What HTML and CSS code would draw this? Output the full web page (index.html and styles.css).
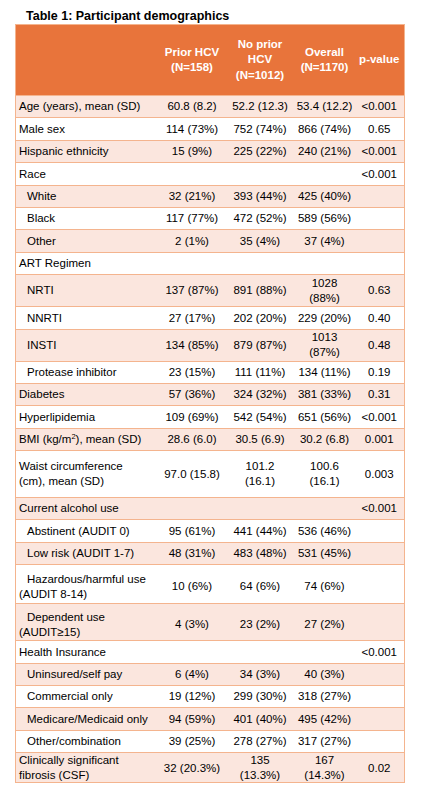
FILE: index.html
```html
<!DOCTYPE html>
<html lang="en">
<head>
    <meta charset="UTF-8">
    <meta name="viewport" content="width=device-width, initial-scale=1.0">
    <title>Table 1: Participant demographics</title>
    <link rel="stylesheet" href="styles.css">
</head>
<body>
    <h1 class="table-title">Table 1: Participant demographics</h1>

    <table class="demo-table">
        <colgroup>
            <col class="col-label">
            <col class="col-prior">
            <col class="col-noprior">
            <col class="col-overall">
            <col class="col-p">
        </colgroup>
        <thead>
            <tr>
                <th></th>
                <th>Prior HCV<br>(N=158)</th>
                <th>No prior<br>HCV<br>(N=1012)</th>
                <th>Overall<br>(N=1170)</th>
                <th>p-value</th>
            </tr>
        </thead>
        <tbody>
            <tr class="band">
                <td class="label">Age (years), mean (SD)</td>
                <td>60.8 (8.2)</td><td>52.2 (12.3)</td><td>53.4 (12.2)</td><td>&lt;0.001</td>
            </tr>
            <tr>
                <td class="label">Male sex</td>
                <td>114 (73%)</td><td>752 (74%)</td><td>866 (74%)</td><td>0.65</td>
            </tr>
            <tr class="band">
                <td class="label">Hispanic ethnicity</td>
                <td>15 (9%)</td><td>225 (22%)</td><td>240 (21%)</td><td>&lt;0.001</td>
            </tr>
            <tr>
                <td class="label">Race</td>
                <td></td><td></td><td></td><td>&lt;0.001</td>
            </tr>
            <tr class="band">
                <td class="label sub">White</td>
                <td>32 (21%)</td><td>393 (44%)</td><td>425 (40%)</td><td></td>
            </tr>
            <tr>
                <td class="label sub">Black</td>
                <td>117 (77%)</td><td>472 (52%)</td><td>589 (56%)</td><td></td>
            </tr>
            <tr class="band">
                <td class="label sub">Other</td>
                <td>2 (1%)</td><td>35 (4%)</td><td>37 (4%)</td><td></td>
            </tr>
            <tr>
                <td class="label">ART Regimen</td>
                <td></td><td></td><td></td><td></td>
            </tr>
            <tr class="band h32">
                <td class="label sub">NRTI</td>
                <td>137 (87%)</td><td>891 (88%)</td><td>1028<br>(88%)</td><td>0.63</td>
            </tr>
            <tr>
                <td class="label sub">NNRTI</td>
                <td>27 (17%)</td><td>202 (20%)</td><td>229 (20%)</td><td>0.40</td>
            </tr>
            <tr class="band h32">
                <td class="label sub">INSTI</td>
                <td>134 (85%)</td><td>879 (87%)</td><td>1013<br>(87%)</td><td>0.48</td>
            </tr>
            <tr>
                <td class="label sub">Protease inhibitor</td>
                <td>23 (15%)</td><td>111 (11%)</td><td>134 (11%)</td><td>0.19</td>
            </tr>
            <tr class="band">
                <td class="label">Diabetes</td>
                <td>57 (36%)</td><td>324 (32%)</td><td>381 (33%)</td><td>0.31</td>
            </tr>
            <tr>
                <td class="label">Hyperlipidemia</td>
                <td>109 (69%)</td><td>542 (54%)</td><td>651 (56%)</td><td>&lt;0.001</td>
            </tr>
            <tr class="band">
                <td class="label">BMI (kg/m<sup>2</sup>), mean (SD)</td>
                <td>28.6 (6.0)</td><td>30.5 (6.9)</td><td>30.2 (6.8)</td><td>0.001</td>
            </tr>
            <tr class="h47">
                <td class="label">Waist circumference<br>(cm), mean (SD)</td>
                <td>97.0 (15.8)</td><td>101.2<br>(16.1)</td><td>100.6<br>(16.1)</td><td>0.003</td>
            </tr>
            <tr class="band">
                <td class="label">Current alcohol use</td>
                <td></td><td></td><td></td><td>&lt;0.001</td>
            </tr>
            <tr>
                <td class="label sub">Abstinent (AUDIT 0)</td>
                <td>95 (61%)</td><td>441 (44%)</td><td>536 (46%)</td><td></td>
            </tr>
            <tr class="band">
                <td class="label sub">Low risk (AUDIT 1-7)</td>
                <td>48 (31%)</td><td>483 (48%)</td><td>531 (45%)</td><td></td>
            </tr>
            <tr class="h39 low">
                <td class="label sub">Hazardous/harmful use<br>(AUDIT 8-14)</td>
                <td>10 (6%)</td><td>64 (6%)</td><td>74 (6%)</td><td></td>
            </tr>
            <tr class="band h37 low">
                <td class="label sub">Dependent use<br>(AUDIT≥15)</td>
                <td>4 (3%)</td><td>23 (2%)</td><td>27 (2%)</td><td></td>
            </tr>
            <tr>
                <td class="label">Health Insurance</td>
                <td></td><td></td><td></td><td>&lt;0.001</td>
            </tr>
            <tr class="band">
                <td class="label sub">Uninsured/self pay</td>
                <td>6 (4%)</td><td>34 (3%)</td><td>40 (3%)</td><td></td>
            </tr>
            <tr>
                <td class="label sub">Commercial only</td>
                <td>19 (12%)</td><td>299 (30%)</td><td>318 (27%)</td><td></td>
            </tr>
            <tr class="band">
                <td class="label sub">Medicare/Medicaid only</td>
                <td>94 (59%)</td><td>401 (40%)</td><td>495 (42%)</td><td></td>
            </tr>
            <tr>
                <td class="label sub">Other/combination</td>
                <td>39 (25%)</td><td>278 (27%)</td><td>317 (27%)</td><td></td>
            </tr>
            <tr class="band h29">
                <td class="label">Clinically significant<br>fibrosis (CSF)</td>
                <td>32 (20.3%)</td><td>135<br>(13.3%)</td><td>167<br>(14.3%)</td><td>0.02</td>
            </tr>
        </tbody>
    </table>
</body>
</html>
```

FILE: styles.css
```css
body {
    font-family: "Liberation Sans", Arial, sans-serif;
    margin: 0;
    background: #ffffff;
    color: #000;
}

.table-title {
    font-size: 12.5px;
    font-weight: bold;
    line-height: 16px;
    margin: 8px 0 0 26px;
    color: #000;
}

.demo-table {
    margin: 0 0 0 15px;
    width: 389px;
    table-layout: fixed;
    border-collapse: collapse;
    border: 1px solid #f4b48e;
    font-size: 11.5px;
}

.col-label { width: 143px; }
.col-prior { width: 67px; }
.col-noprior { width: 69px; }
.col-overall { width: 60px; }
.col-p { width: 50px; }

.demo-table thead tr {
    height: 71px;
}

.demo-table th {
    background: #e8743b;
    color: #ffffff;
    font-weight: bold;
    line-height: 15.3px;
    text-align: center;
    vertical-align: middle;
    padding: 0 2px;
}

.demo-table tbody tr {
    height: 22.4px;
}

.demo-table td {
    padding: 0 2px;
    line-height: 14.6px;
    text-align: center;
    vertical-align: middle;
    border-top: 1px solid #f4b48e;
    white-space: nowrap;
}

.demo-table tr.band td {
    background: #fbe6de;
}

.demo-table td.label {
    text-align: left;
    padding-left: 3px;
}

.demo-table td.sub {
    text-indent: 8px;
}

.demo-table tr.h32 { height: 32px; }
.demo-table tr.h47 { height: 47px; }
.demo-table tr.h39 { height: 39px; }
.demo-table tr.h37 { height: 37px; }
.demo-table tr.h29 { height: 29px; }

.demo-table tr.low td {
    padding-top: 5px;
}

sup {
    font-size: 7.5px;
    line-height: 0;
    vertical-align: 4px;
}
```
